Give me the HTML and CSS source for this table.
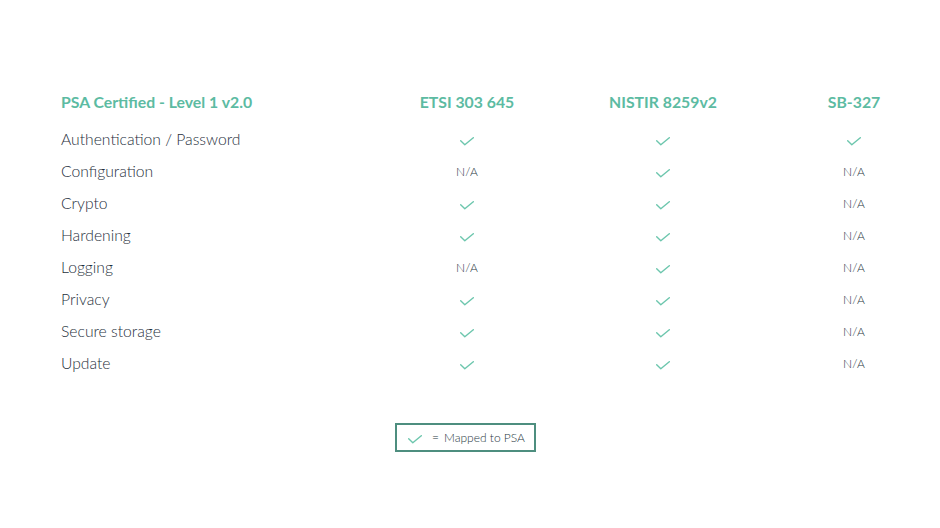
FILE: index.html
```html
<!DOCTYPE html>
<html lang="en">
<head>
<meta charset="utf-8">
<title>PSA Certified mapping</title>
<link rel="stylesheet" href="styles.css">
</head>
<body>
<main class="page">
  <div class="table">
    <div class="hd first">PSA Certified - Level 1 v2.0</div>
    <div class="hd">ETSI 303 645</div>
    <div class="hd">NISTIR 8259v2</div>
    <div class="hd">SB-327</div>

    <div class="label">Authentication / Password</div>
    <div class="cell"><svg class="chk" viewBox="0 0 14 9"><path d="M0.7 3.8 L4.8 7.8 L13.3 0.7"/></svg></div>
    <div class="cell"><svg class="chk" viewBox="0 0 14 9"><path d="M0.7 3.8 L4.8 7.8 L13.3 0.7"/></svg></div>
    <div class="cell"><svg class="chk" viewBox="0 0 14 9"><path d="M0.7 3.8 L4.8 7.8 L13.3 0.7"/></svg></div>

    <div class="label">Configuration</div>
    <div class="cell na">N/A</div>
    <div class="cell"><svg class="chk" viewBox="0 0 14 9"><path d="M0.7 3.8 L4.8 7.8 L13.3 0.7"/></svg></div>
    <div class="cell na">N/A</div>

    <div class="label">Crypto</div>
    <div class="cell"><svg class="chk" viewBox="0 0 14 9"><path d="M0.7 3.8 L4.8 7.8 L13.3 0.7"/></svg></div>
    <div class="cell"><svg class="chk" viewBox="0 0 14 9"><path d="M0.7 3.8 L4.8 7.8 L13.3 0.7"/></svg></div>
    <div class="cell na">N/A</div>

    <div class="label">Hardening</div>
    <div class="cell"><svg class="chk" viewBox="0 0 14 9"><path d="M0.7 3.8 L4.8 7.8 L13.3 0.7"/></svg></div>
    <div class="cell"><svg class="chk" viewBox="0 0 14 9"><path d="M0.7 3.8 L4.8 7.8 L13.3 0.7"/></svg></div>
    <div class="cell na">N/A</div>

    <div class="label">Logging</div>
    <div class="cell na">N/A</div>
    <div class="cell"><svg class="chk" viewBox="0 0 14 9"><path d="M0.7 3.8 L4.8 7.8 L13.3 0.7"/></svg></div>
    <div class="cell na">N/A</div>

    <div class="label">Privacy</div>
    <div class="cell"><svg class="chk" viewBox="0 0 14 9"><path d="M0.7 3.8 L4.8 7.8 L13.3 0.7"/></svg></div>
    <div class="cell"><svg class="chk" viewBox="0 0 14 9"><path d="M0.7 3.8 L4.8 7.8 L13.3 0.7"/></svg></div>
    <div class="cell na">N/A</div>

    <div class="label">Secure storage</div>
    <div class="cell"><svg class="chk" viewBox="0 0 14 9"><path d="M0.7 3.8 L4.8 7.8 L13.3 0.7"/></svg></div>
    <div class="cell"><svg class="chk" viewBox="0 0 14 9"><path d="M0.7 3.8 L4.8 7.8 L13.3 0.7"/></svg></div>
    <div class="cell na">N/A</div>

    <div class="label">Update</div>
    <div class="cell"><svg class="chk" viewBox="0 0 14 9"><path d="M0.7 3.8 L4.8 7.8 L13.3 0.7"/></svg></div>
    <div class="cell"><svg class="chk" viewBox="0 0 14 9"><path d="M0.7 3.8 L4.8 7.8 L13.3 0.7"/></svg></div>
    <div class="cell na">N/A</div>
  </div>

  <div class="legend-row">
    <div class="legend">
      <svg class="chk" viewBox="0 0 14 9"><path d="M0.7 3.8 L4.8 7.8 L13.3 0.7"/></svg>
      <span class="eq">=</span>
      <span class="legend-text">Mapped to PSA</span>
    </div>
  </div>
</main>
</body>
</html>
```

FILE: styles.css
```css
html, body {
  margin: 0;
  padding: 0;
  background: #ffffff;
  overflow: hidden;
}

.page {
  width: 940px;
  height: 528px;
  box-sizing: border-box;
  padding: 86px 0 0 61px;
  font-family: Lato, "Open Sans", sans-serif;
  color: #263642;
}

.table {
  display: grid;
  grid-template-columns: 316px 180px 212px 170px;
  grid-auto-rows: 32px;
  grid-template-rows: 37px;
}

.hd {
  font-weight: 700;
  font-size: 15.8px;
  line-height: 32px;
  color: #5cbba2;
  text-align: center;
  align-self: start;
}

.hd.first {
  text-align: left;
}

.label {
  font-size: 15.7px;
  font-weight: 300;
  line-height: 32px;
  color: #1f303c;
}

.cell {
  display: flex;
  align-items: center;
  justify-content: center;
}

.cell .chk {
  margin-top: 4px;
}

.na {
  font-size: 12px;
  font-weight: 300;
  color: #283843;
  letter-spacing: 0.2px;
}

.chk {
  width: 14px;
  height: 9px;
  display: block;
}

.chk path {
  fill: none;
  stroke: #6cc6ad;
  stroke-width: 1.4;
  stroke-linecap: round;
  stroke-linejoin: round;
}

.legend-row {
  display: flex;
  padding-top: 44px;
  padding-left: 334px;
}

.legend {
  display: flex;
  align-items: center;
  width: 141px;
  height: 29px;
  box-sizing: border-box;
  border: 2px solid #4e8e7f;
  padding-left: 11px;
}

.legend .chk {
  margin-top: 3px;
}

.eq {
  font-size: 12px;
  font-weight: 300;
  margin-left: 10px;
  color: #283843;
}

.legend-text {
  font-size: 12px;
  font-weight: 300;
  margin-left: 5px;
  color: #283843;
}
```
